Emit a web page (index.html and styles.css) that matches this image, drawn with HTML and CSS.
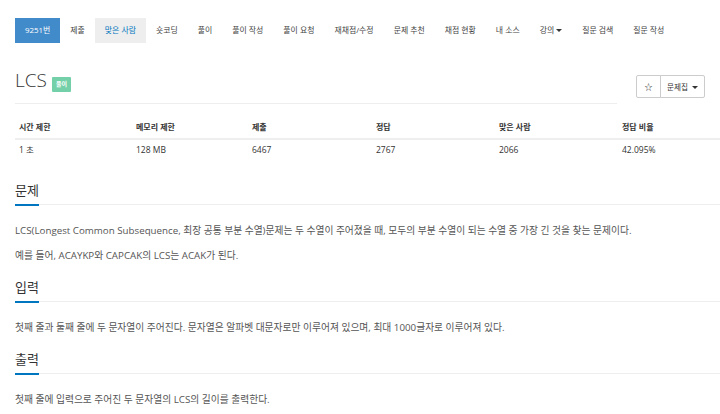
FILE: index.html
```html
<!DOCTYPE html>
<html lang="ko">
<head>
<meta charset="UTF-8">
<meta name="viewport" content="width=device-width, initial-scale=1.0">
<title>LCS</title>
<link rel="stylesheet" href="styles.css">
</head>
<body>

<div class="wrapper">
    <ul class="problem-menu">
        <li class="menu-num"><a href="#">9251번</a></li>
        <li><a href="#">제출</a></li>
        <li class="active"><a href="#">맞은 사람</a></li>
        <li><a href="#">숏코딩</a></li>
        <li><a href="#">풀이</a></li>
        <li><a href="#">풀이 작성</a></li>
        <li><a href="#">풀이 요청</a></li>
        <li><a href="#">재채점/수정</a></li>
        <li><a href="#">문제 추천</a></li>
        <li><a href="#">채점 현황</a></li>
        <li><a href="#">내 소스</a></li>
        <li><a href="#">강의<span class="caret"></span></a></li>
        <li><a href="#">질문 검색</a></li>
        <li><a href="#">질문 작성</a></li>
    </ul>

    <div class="title-row">
        <div class="page-header">
            <h1 class="problem-title">LCS</h1>
            <span class="label-solution">풀이</span>
        </div>
        <div class="btn-group">
            <button class="btn">&#9734;</button>
            <button class="btn">문제집 <span class="caret"></span></button>
        </div>
    </div>

    <table class="problem-info">
        <thead>
            <tr>
                <th class="c1">시간 제한</th>
                <th class="c2">메모리 제한</th>
                <th class="c3">제출</th>
                <th class="c4">정답</th>
                <th class="c5">맞은 사람</th>
                <th>정답 비율</th>
            </tr>
        </thead>
        <tbody>
            <tr>
                <td>1 초</td>
                <td>128 MB</td>
                <td>6467</td>
                <td>2767</td>
                <td>2066</td>
                <td>42.095%</td>
            </tr>
        </tbody>
    </table>

    <section class="problem-section first">
        <h2 class="headline"><span>문제</span></h2>
        <div class="problem-text">
            <p>LCS(Longest Common Subsequence, 최장 공통 부분 수열)문제는 두 수열이 주어졌을 때, 모두의 부분 수열이 되는 수열 중 가장 긴 것을 찾는 문제이다.</p>
            <p>예를 들어, ACAYKP와 CAPCAK의 LCS는 ACAK가 된다.</p>
        </div>
    </section>

    <section class="problem-section">
        <h2 class="headline"><span>입력</span></h2>
        <div class="problem-text">
            <p>첫째 줄과 둘째 줄에 두 문자열이 주어진다. 문자열은 알파벳 대문자로만 이루어져 있으며, 최대 1000글자로 이루어져 있다.</p>
        </div>
    </section>

    <section class="problem-section">
        <h2 class="headline"><span>출력</span></h2>
        <div class="problem-text">
            <p>첫째 줄에 입력으로 주어진 두 문자열의 LCS의 길이를 출력한다.</p>
        </div>
    </section>
</div>

</body>
</html>
```

FILE: styles.css
```css
body {
    margin: 0;
    font-family: "Open Sans", "Noto Sans CJK KR", sans-serif;
    color: #333;
    background: #fff;
}
.wrapper {
    padding: 18px 0 0 15px;
}
.problem-menu {
    list-style: none;
    margin: 0;
    padding: 0;
    display: flex;
    font-size: 7.9px;
}
.problem-menu a {
    display: block;
    line-height: 25px;
    padding: 0 10px;
    color: #444;
    text-decoration: none;
    white-space: nowrap;
}
.problem-menu .menu-num a {
    background: #428bca;
    color: #fff;
}
.problem-menu .active a {
    background: #eee;
    color: #0076c0;
}
.caret {
    display: inline-block;
    width: 0;
    height: 0;
    margin-left: 2px;
    vertical-align: middle;
    border-top: 3px solid #333;
    border-left: 3px solid transparent;
    border-right: 3px solid transparent;
}
.title-row {
    display: flex;
    align-items: flex-start;
    margin-top: 24px;
}
.page-header {
    width: 602px;
    display: flex;
    align-items: flex-end;
    padding-bottom: 10px;
    border-bottom: 1px solid #eee;
}
.problem-title {
    margin: 0;
    font-size: 19px;
    font-weight: 300;
    line-height: 26px;
}
.label-solution {
    margin: 0 0 1px 5px;
    padding: 0 4px;
    line-height: 15px;
    font-size: 6px;
    font-weight: bold;
    color: #fff;
    background: #74d0a9;
    border-radius: 1px;
}
.btn-group {
    display: flex;
    margin: 8px 0 0 19px;
}
.btn {
    font-family: inherit;
    font-size: 7.6px;
    color: #333;
    background: #fff;
    border: 1px solid #ccc;
    height: 23px;
    padding: 0 6px;
    margin: 0;
}
.btn:first-child {
    width: 25px;
    font-size: 8px;
    border-radius: 2px 0 0 2px;
}
.btn + .btn {
    margin-left: -1px;
    border-radius: 0 2px 2px 0;
}
.problem-info {
    width: 100%;
    margin-top: 12px;
    border-collapse: collapse;
    font-size: 8px;
    text-align: left;
}
.problem-info th,
.problem-info td {
    padding: 5px 4px;
    line-height: 12px;
}
.problem-info th {
    font-weight: bold;
    border-bottom: 2px solid #eee;
}
.problem-info td {
    padding-top: 4px;
    font-size: 8.5px;
}
.c1 { width: 109px; }
.c2 { width: 108px; }
.c3 { width: 116px; }
.c4 { width: 115px; }
.c5 { width: 115px; }
.problem-section {
    margin-top: 14px;
}
.problem-section.first {
    margin-top: 20px;
}
.headline {
    display: flex;
    align-items: flex-end;
    margin: 0;
    font-size: 13px;
    font-weight: normal;
    line-height: 18px;
}
.headline span {
    padding-bottom: 5px;
    border-bottom: 2px solid #0076c0;
}
.headline::after {
    content: "";
    flex: 1;
    margin-bottom: 1px;
    border-bottom: 1px solid #eee;
}
.problem-text {
    margin-top: 17px;
    font-size: 9.75px;
    color: #555;
}
.problem-text p {
    margin: 0 0 9px;
    line-height: 16px;
}
```
